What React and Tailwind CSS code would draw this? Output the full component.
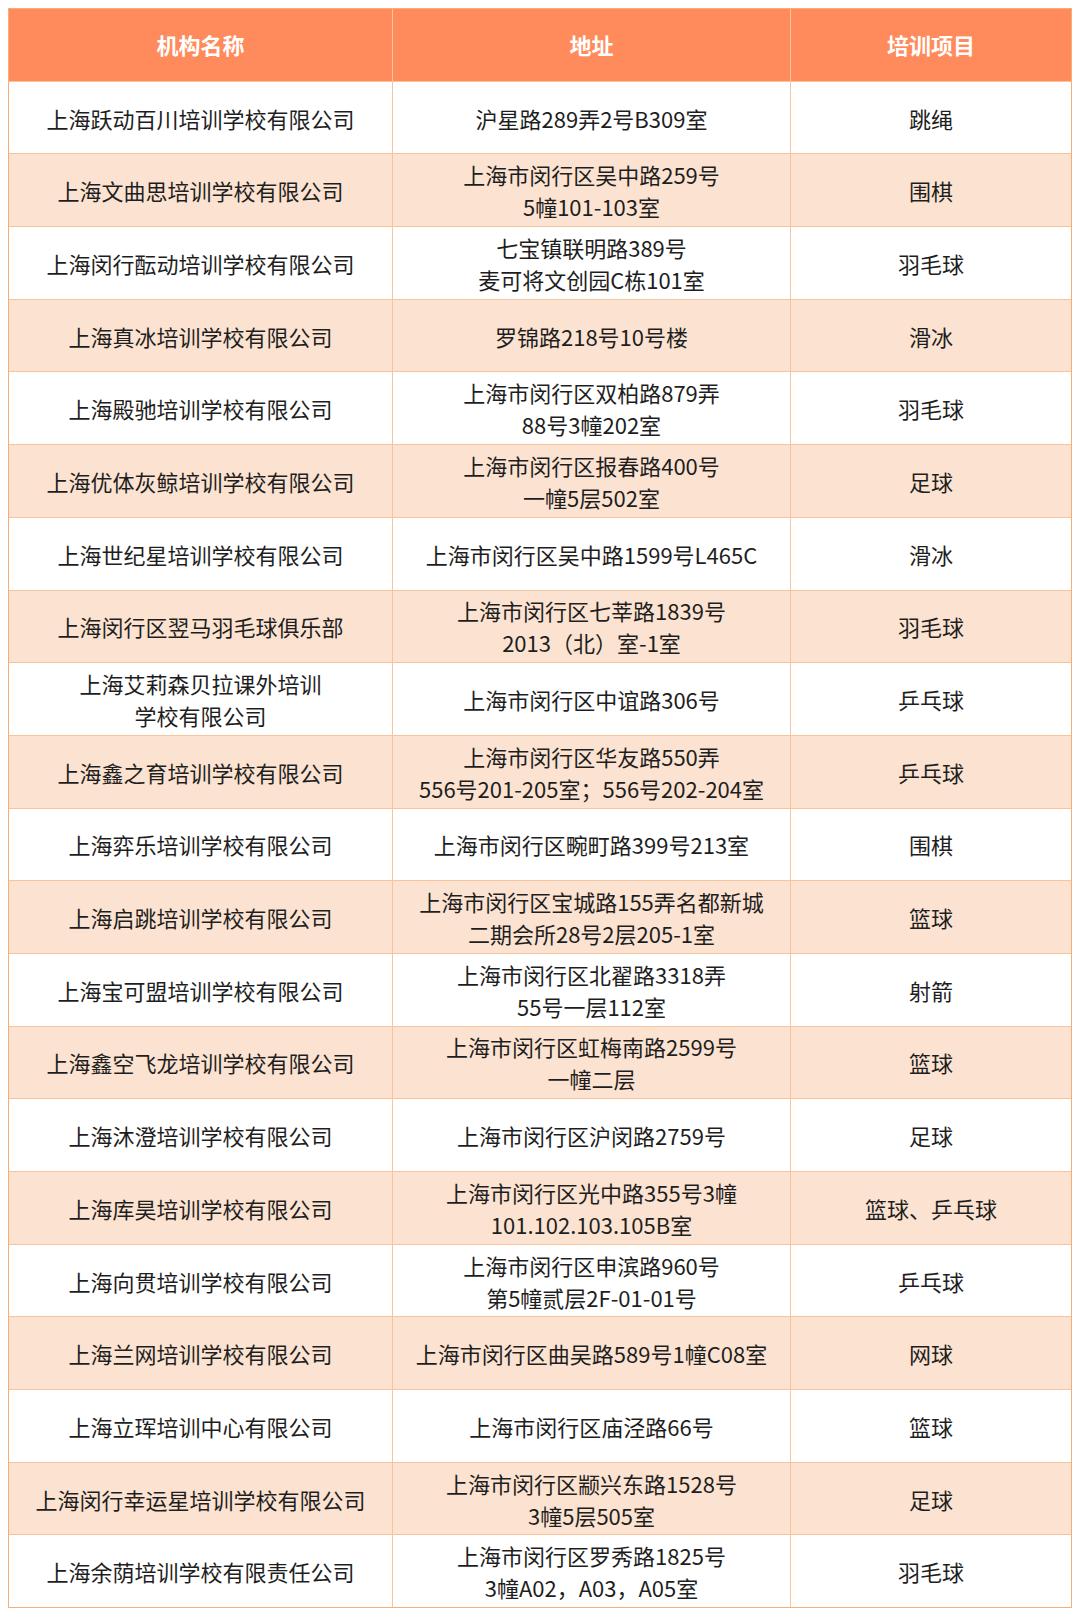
import React from 'react';

const rows = [
    ['上海跃动百川培训学校有限公司', ['沪星路289弄2号B309室'], '跳绳'],
    ['上海文曲思培训学校有限公司', ['上海市闵行区吴中路259号', '5幢101-103室'], '围棋'],
    ['上海闵行酝动培训学校有限公司', ['七宝镇联明路389号', '麦可将文创园C栋101室'], '羽毛球'],
    ['上海真冰培训学校有限公司', ['罗锦路218号10号楼'], '滑冰'],
    ['上海殿驰培训学校有限公司', ['上海市闵行区双柏路879弄', '88号3幢202室'], '羽毛球'],
    ['上海优体灰鲸培训学校有限公司', ['上海市闵行区报春路400号', '一幢5层502室'], '足球'],
    ['上海世纪星培训学校有限公司', ['上海市闵行区吴中路1599号L465C'], '滑冰'],
    ['上海闵行区翌马羽毛球俱乐部', ['上海市闵行区七莘路1839号', '2013（北）室-1室'], '羽毛球'],
    [['上海艾莉森贝拉课外培训', '学校有限公司'], ['上海市闵行区中谊路306号'], '乒乓球'],
    ['上海鑫之育培训学校有限公司', ['上海市闵行区华友路550弄', '556号201-205室；556号202-204室'], '乒乓球'],
    ['上海弈乐培训学校有限公司', ['上海市闵行区畹町路399号213室'], '围棋'],
    ['上海启跳培训学校有限公司', ['上海市闵行区宝城路155弄名都新城', '二期会所28号2层205-1室'], '篮球'],
    ['上海宝可盟培训学校有限公司', ['上海市闵行区北翟路3318弄', '55号一层112室'], '射箭'],
    ['上海鑫空飞龙培训学校有限公司', ['上海市闵行区虹梅南路2599号', '一幢二层'], '篮球'],
    ['上海沐澄培训学校有限公司', ['上海市闵行区沪闵路2759号'], '足球'],
    ['上海库昊培训学校有限公司', ['上海市闵行区光中路355号3幢', '101.102.103.105B室'], '篮球、乒乓球'],
    ['上海向贯培训学校有限公司', ['上海市闵行区申滨路960号', '第5幢贰层2F-01-01号'], '乒乓球'],
    ['上海兰网培训学校有限公司', ['上海市闵行区曲吴路589号1幢C08室'], '网球'],
    ['上海立珲培训中心有限公司', ['上海市闵行区庙泾路66号'], '篮球'],
    ['上海闵行幸运星培训学校有限公司', ['上海市闵行区颛兴东路1528号', '3幢5层505室'], '足球'],
    ['上海余荫培训学校有限责任公司', ['上海市闵行区罗秀路1825号', '3幢A02，A03，A05室'], '羽毛球'],
];

const Lines = ({ value }) => {
    const list = Array.isArray(value) ? value : [value];
    return (
        <div className="flex flex-col items-center">
            {list.map((line, i) => (
                <span key={i} className="leading-[32px] whitespace-nowrap">{line}</span>
            ))}
        </div>
    );
};

export default function App() {
    return (
        <div className="bg-white min-h-[1618px] p-2" style={{ fontFamily: '"Noto Sans CJK SC", "Noto Sans", sans-serif' }}>
            <div className="w-[1064px] border-x border-t border-[#f6ae79] text-[22px] text-[#1e1e1e]">
                {/* Header */}
                <div className="grid grid-cols-[384px_398px_280px] h-[72.7px] bg-[#ff8a5b] border-b border-[#f9c39b] text-white font-bold">
                    <div className="flex items-center justify-center border-r border-[#f9c39b]">机构名称</div>
                    <div className="flex items-center justify-center border-r border-[#f9c39b]">地址</div>
                    <div className="flex items-center justify-center">培训项目</div>
                </div>

                {/* Body */}
                {rows.map((row, index) => (
                    <div
                        key={index}
                        className={`grid grid-cols-[384px_398px_280px] h-[72.7px] border-b ${index === rows.length - 1 ? 'border-[#f6ae79]' : 'border-[#f9c39b]'} ${index % 2 === 1 ? 'bg-[#fce3d1]' : 'bg-white'}`}
                    >
                        <div className="flex items-center justify-center border-r border-[#f9c39b]">
                            <Lines value={row[0]} />
                        </div>
                        <div className="flex items-center justify-center border-r border-[#f9c39b]">
                            <Lines value={row[1]} />
                        </div>
                        <div className="flex items-center justify-center">
                            <Lines value={row[2]} />
                        </div>
                    </div>
                ))}
            </div>
        </div>
    );
}
